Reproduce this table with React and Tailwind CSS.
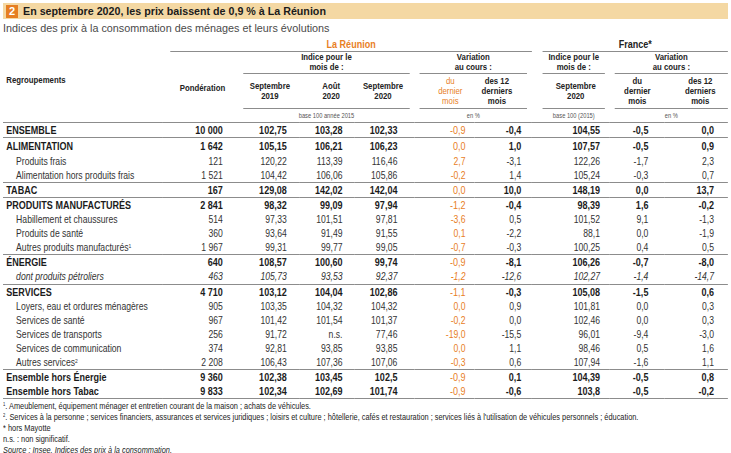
const rows = [
  { label: "ENSEMBLE", kind: "main", top: true, v: ["10 000", "102,75", "103,28", "102,33", "-0,9", "-0,4", "104,55", "-0,5", "0,0"] },
  { label: "ALIMENTATION", kind: "main", top: true, tall: true, v: ["1 642", "105,15", "106,21", "106,23", "0,0", "1,0", "107,57", "-0,5", "0,9"] },
  { label: "Produits frais", kind: "sub", v: ["121", "120,22", "113,39", "116,46", "2,7", "-3,1", "122,26", "-1,7", "2,3"] },
  { label: "Alimentation hors produits frais", kind: "sub", v: ["1 521", "104,42", "106,06", "105,86", "-0,2", "1,4", "105,24", "-0,3", "0,7"] },
  { label: "TABAC", kind: "main", top: true, v: ["167", "129,08", "142,02", "142,04", "0,0", "10,0", "148,19", "0,0", "13,7"] },
  { label: "PRODUITS MANUFACTURÉS", kind: "main", top: true, v: ["2 841", "98,32", "99,09", "97,94", "-1,2", "-0,4", "98,39", "1,6", "-0,2"] },
  { label: "Habillement et chaussures", kind: "sub", v: ["514", "97,33", "101,51", "97,81", "-3,6", "0,5", "101,52", "9,1", "-1,3"] },
  { label: "Produits de santé", kind: "sub", v: ["360", "93,64", "91,49", "91,55", "0,1", "-2,2", "88,1", "0,0", "-1,9"] },
  { label: "Autres produits manufacturés", sup: "1", kind: "sub", v: ["1 967", "99,31", "99,77", "99,05", "-0,7", "-0,3", "100,25", "0,4", "0,5"] },
  { label: "ÉNERGIE", kind: "main", top: true, v: ["640", "108,57", "100,60", "99,74", "-0,9", "-8,1", "106,26", "-0,7", "-8,0"] },
  { label: "dont produits pétroliers", kind: "ital", v: ["463", "105,73", "93,53", "92,37", "-1,2", "-12,6", "102,27", "-1,4", "-14,7"] },
  { label: "SERVICES", kind: "main", top: true, v: ["4 710", "103,12", "104,04", "102,86", "-1,1", "-0,3", "105,08", "-1,5", "0,6"] },
  { label: "Loyers, eau et ordures ménagères", kind: "sub", v: ["905", "103,35", "104,32", "104,32", "0,0", "0,9", "101,81", "0,0", "0,3"] },
  { label: "Services de santé", kind: "sub", v: ["967", "101,42", "101,54", "101,37", "-0,2", "0,0", "102,46", "0,0", "0,3"] },
  { label: "Services de transports", kind: "sub", v: ["256", "91,72", "n.s.", "77,46", "-19,0", "-15,5", "96,01", "-9,4", "-3,0"] },
  { label: "Services de communication", kind: "sub", v: ["374", "92,81", "93,85", "93,85", "0,0", "1,1", "98,46", "0,5", "1,6"] },
  { label: "Autres services", sup: "2", kind: "sub", v: ["2 208", "106,43", "107,36", "107,06", "-0,3", "0,6", "107,94", "-1,6", "1,1"] },
  { label: "Ensemble hors Énergie", kind: "main", top: true, v: ["9 360", "102,38", "103,45", "102,5", "-0,9", "0,1", "104,39", "-0,5", "0,8"] },
  { label: "Ensemble hors Tabac", kind: "main", short: true, bottom: true, v: ["9 833", "102,34", "102,69", "101,74", "-0,9", "-0,6", "103,8", "-0,5", "-0,2"] },
];

// table is drawn 1/0.82 wider then squeezed, to get an Arial Narrow look
const pads = ["pr-[21px]", "pr-[16px]", "pr-[15px]", "pr-[21px]", "pr-[11px]", "pr-[13px]", "pr-[12px]", "pr-[20px]", "pr-[17px]"];
const widths = ["w-[195px]", "w-[94px]", "w-[73px]", "w-[67px]", "w-[73px]", "w-[73px]", "w-[70px]", "w-[95px]", "w-[67px]", "w-[77px]"];

function Row({ r }) {
  const main = r.kind === "main";
  const ital = r.kind === "ital";
  const h = r.tall ? "h-[17px]" : main ? (r.short ? "h-[14px]" : "h-[15px]") : ital ? "h-[15px]" : "h-[14px]";
  const rowCls = [
    h,
    "leading-[12px]",
    main ? "font-bold text-[11px] text-[#1b1b1b]" : "text-[10.5px] text-[#333]",
    ital ? "italic" : "",
    r.top ? "border-t border-[#8c8c8c]" : "",
    r.bottom ? "border-b border-[#8c8c8c]" : "",
  ].join(" ");
  return (
    <tr className={rowCls}>
      <td className={main ? "pl-[4px] whitespace-nowrap" : "pl-[16px] whitespace-nowrap"}>
        {r.label}
        {r.sup && <sup className="text-[6px]">{r.sup}</sup>}
      </td>
      {r.v.map((x, i) => (
        <td key={i} className={`text-right ${pads[i]} ${i === 4 ? "text-[#e8801f] font-normal" : ""}`}>
          {x}
        </td>
      ))}
    </tr>
  );
}

export default function App() {
  return (
    <div className="w-[731px] h-[453px] bg-white overflow-hidden font-['Liberation_Sans',Arial,sans-serif] text-[#1b1b1b]">
      <div className="mx-[3px] mt-[3px] h-[16px] bg-[#f4d8a3] flex items-center">
        <div className="ml-[3px] w-[12px] h-[13px] bg-[#e67e22] text-white text-[11px] font-bold flex items-center justify-center leading-none">
          2
        </div>
        <div className="ml-[5px] text-[10.7px] font-bold leading-none">
          En septembre 2020, les prix baissent de 0,9 % à La Réunion
        </div>
      </div>
      <div className="mx-[3px] mt-[3px] text-[10.8px] text-[#4a4a4a] leading-[13px]">
        Indices des prix à la consommation des ménages et leurs évolutions
      </div>

      <div className="ml-[3px] mt-[3px] w-[725px]">
        <table className="w-[884px] table-fixed border-collapse origin-top-left scale-x-[0.82]">
          <colgroup>
            {widths.map((w, i) => (
              <col key={i} className={w} />
            ))}
          </colgroup>
          <thead className="text-[9.5px] font-bold text-[#222] leading-[10px]">
            <tr className="h-[14px]">
              <th></th>
              <th colSpan={6} className="p-0 align-bottom">
                <div className="ml-[9px] border-b border-[#8c8c8c] text-[11px] leading-[12px] text-[#e8801f] pb-[1px]">La Réunion</div>
              </th>
              <th colSpan={3} className="p-0 align-bottom">
                <div className="ml-[13px] border-b border-[#8c8c8c] text-[11px] leading-[12px] pb-[1px]">France*</div>
              </th>
            </tr>
            <tr className="h-[22px]">
              <th></th>
              <th></th>
              <th colSpan={3} className="p-0 align-bottom">
                <div className="ml-[4px] mr-[6px] border-b border-[#8c8c8c] pb-[1px]">
                  Indice pour le
                  <br />
                  mois de :
                </div>
              </th>
              <th colSpan={2} className="p-0 align-bottom">
                <div className="ml-[6px] mr-[6px] border-b border-[#8c8c8c] pb-[1px]">
                  Variation
                  <br />
                  au cours :
                </div>
              </th>
              <th className="p-0 align-bottom">
                <div className="ml-[13px] mr-[6px] border-b border-[#8c8c8c] pb-[1px]">
                  Indice pour le
                  <br />
                  mois de :
                </div>
              </th>
              <th colSpan={2} className="p-0 align-bottom">
                <div className="ml-[6px] border-b border-[#8c8c8c] pb-[1px]">
                  Variation
                  <br />
                  au cours :
                </div>
              </th>
            </tr>
            <tr className="h-[34px]">
              <th className="text-left align-top pl-[4px] pt-[1px]">Regroupements</th>
              <th className="text-right pr-[18px] align-top pt-[9px]">Pondération</th>
              <th className="text-right pr-[12px]">
                <div className="inline-block text-center">
                  Septembre
                  <br />
                  2019
                </div>
              </th>
              <th className="text-right pr-[18px]">
                <div className="inline-block text-center">
                  Août
                  <br />
                  2020
                </div>
              </th>
              <th className="text-right pr-[14px]">
                <div className="inline-block text-center">
                  Septembre
                  <br />
                  2020
                </div>
              </th>
              <th className="text-center font-normal text-[#e8801f] pl-[14px]">
                du
                <br />
                dernier
                <br />
                mois
              </th>
              <th className="text-right pr-[24px]">
                <div className="inline-block text-center">
                  des 12
                  <br />
                  derniers
                  <br />
                  mois
                </div>
              </th>
              <th className="text-right pr-[17px]">
                <div className="inline-block text-center">
                  Septembre
                  <br />
                  2020
                </div>
              </th>
              <th className="text-center">
                du
                <br />
                dernier
                <br />
                mois
              </th>
              <th className="text-right pr-[15px]">
                <div className="inline-block text-center">
                  des 12
                  <br />
                  derniers
                  <br />
                  mois
                </div>
              </th>
            </tr>
            <tr className="h-[14px] text-[7px] text-[#555]">
              <th></th>
              <th></th>
              <th colSpan={3} className="p-0 font-normal align-top">
                <div className="ml-[4px] mr-[6px] border-t border-[#8c8c8c] pt-[2px]">base 100 année 2015</div>
              </th>
              <th colSpan={2} className="p-0 font-normal align-top">
                <div className="ml-[6px] mr-[6px] border-t border-[#8c8c8c] pt-[2px]">en %</div>
              </th>
              <th className="p-0 font-normal align-top">
                <div className="ml-[13px] mr-[6px] border-t border-[#8c8c8c] pt-[2px]">base 100 (2015)</div>
              </th>
              <th colSpan={2} className="p-0 font-normal align-top">
                <div className="ml-[6px] border-t border-[#8c8c8c] pt-[2px]">en %</div>
              </th>
            </tr>
          </thead>
          <tbody>
            {rows.map((r, i) => (
              <Row key={i} r={r} />
            ))}
          </tbody>
        </table>
      </div>

      <div className="ml-[3px] mt-[2px] w-[884px] origin-top-left scale-x-[0.82] text-[9px] leading-[11px] text-[#222] whitespace-nowrap">
        <div>
          <sup className="text-[5px]">1</sup>. Ameublement, équipement ménager et entretien courant de la maison ; achats de véhicules.
        </div>
        <div>
          <sup className="text-[5px]">2</sup>. Services à la personne ; services financiers, assurances et services juridiques ; loisirs et culture ; hôtellerie, cafés et restauration ; services liés à l'utilisation de véhicules personnels ; éducation.
        </div>
        <div>* hors Mayotte</div>
        <div>n.s. : non significatif.</div>
        <div className="italic">Source : Insee, Indices des prix à la consommation.</div>
      </div>
    </div>
  );
}
